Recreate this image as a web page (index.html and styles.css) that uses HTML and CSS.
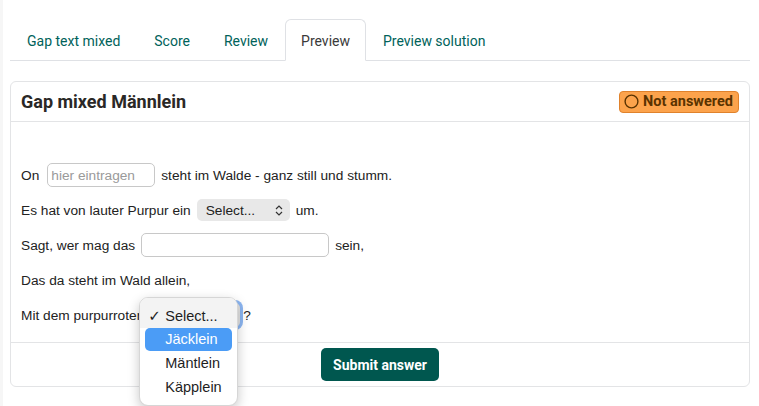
FILE: index.html
```html
<!DOCTYPE html>
<html lang="de">

<head>
    <meta charset="UTF-8">
    <meta name="viewport" content="width=device-width, initial-scale=1.0">
    <title>Preview</title>
    <link rel="stylesheet" href="styles.css">
</head>

<body>

    <ul class="tabs">
        <li class="tab">Gap text mixed</li>
        <li class="tab">Score</li>
        <li class="tab">Review</li>
        <li class="tab ativo">Preview</li>
        <li class="tab">Preview solution</li>
    </ul>

    <div class="card">
        <div class="card-topo">
            <h2 class="titulo">Gap mixed Männlein</h2>
            <span class="selo">
                <svg width="15" height="15" viewBox="0 0 15 15"><circle cx="7.5" cy="7.5" r="6.4" fill="none" stroke="#5a3300" stroke-width="1.4"/></svg>
                Not answered
            </span>
        </div>

        <div class="card-corpo">
            <div class="linha">
                <span>On</span>
                <input class="campo campo-curto" type="text" placeholder="hier eintragen">
                <span>steht im Walde - ganz still und stumm.</span>
            </div>
            <div class="linha">
                <span>Es hat von lauter Purpur ein</span>
                <span class="escolha">
                    Select...
                    <svg width="8" height="11" viewBox="0 0 8 11"><path d="M1 4 L4 1 L7 4 M1 7 L4 10 L7 7" fill="none" stroke="#333" stroke-width="1.2"/></svg>
                </span>
                <span>um.</span>
            </div>
            <div class="linha">
                <span>Sagt, wer mag das</span>
                <input class="campo campo-longo" type="text">
                <span>sein,</span>
            </div>
            <div class="linha">
                <span>Das da steht im Wald allein,</span>
            </div>
            <div class="linha">
                <span>Mit dem purpurroten</span>
                <span class="escolha-aberta">
                    <span class="escolha escolha-foco"></span>
                    <ul class="menu">
                        <li class="opcao marcada"><span class="check">✓</span>Select...</li>
                        <li class="opcao destaque">Jäcklein</li>
                        <li class="opcao">Mäntlein</li>
                        <li class="opcao">Käpplein</li>
                    </ul>
                </span>
                <span class="colado">?</span>
            </div>
        </div>

        <div class="card-rodape">
            <button class="botao">Submit answer</button>
        </div>
    </div>

</body>

</html>
```

FILE: styles.css
```css
html {
    height: 100%;
}

body {
    box-sizing: border-box;
    min-height: 100%;
    margin: 0;
    padding: 19px 9px 0 7px;
    background-color: #fff;
    font-family: Roboto, "Liberation Sans", sans-serif;
    border-left: 3px solid #f6f6f6;
}

.tabs {
    display: flex;
    list-style: none;
    margin: 0;
    padding: 0;
    border-bottom: 1px solid #dfe1e5;
}

.tab {
    padding: 12px 16px 10px 16px;
    font-size: 14px;
    line-height: 18px;
    color: #00625a;
    border: 1px solid transparent;
    border-radius: 6px 6px 0 0;
    margin-bottom: -1px;
}

.tab.ativo {
    color: #3a3a3a;
    background-color: #fff;
    border-color: #dfe1e5 #dfe1e5 #fff;
    padding: 12px 15px 10px 15px;
}

.card {
    margin-top: 20px;
    border: 1px solid #e3e4e6;
    border-radius: 6px;
}

.card-topo {
    display: flex;
    justify-content: space-between;
    align-items: center;
    height: 39px;
    padding: 0 10px;
    border-bottom: 1px solid #e3e4e6;
}

.titulo {
    margin: 0;
    font-size: 18px;
    font-weight: bold;
    color: #2a2826;
}

.selo {
    display: flex;
    align-items: center;
    gap: 4px;
    height: 20px;
    padding: 0 5px 0 4px;
    background-color: #fca34c;
    border: 1px solid #e0822c;
    border-radius: 4px;
    color: #5a3300;
    font-size: 14.5px;
    font-weight: bold;
}

.card-corpo {
    padding: 41px 10px 15px 10px;
    font-family: "Liberation Sans", Arial, sans-serif;
    font-size: 13.7px;
    color: #222;
}

.linha {
    display: flex;
    align-items: center;
    gap: 6px;
    height: 24px;
    margin-bottom: 11px;
}

.linha:last-child {
    margin-bottom: 0;
}

.campo {
    box-sizing: border-box;
    height: 24px;
    border: 1px solid #c8c8c8;
    border-radius: 5px;
    padding: 0 3px;
    font-family: "Liberation Sans", Arial, sans-serif;
    font-size: 13.7px;
    outline: none;
}

.campo::placeholder {
    color: #9a9a9a;
}

.campo-curto {
    width: 108px;
    margin-left: 2px;
}

.campo-longo {
    width: 188px;
}

.escolha {
    box-sizing: border-box;
    display: flex;
    align-items: center;
    justify-content: space-between;
    width: 93px;
    height: 22px;
    padding: 0 7px 0 9px;
    background-color: #e8e8e8;
    border-radius: 5px;
    color: #222;
}

.escolha-aberta {
    position: relative;
    display: flex;
}

.escolha-foco {
    width: 90px;
    height: 24px;
    background-color: #e2e2e2;
    box-shadow: 0 0 0 3px #8cb6f2;
}

.colado {
    margin-left: -3px;
}

.menu {
    position: absolute;
    left: -11px;
    top: -6px;
    width: 99px;
    box-sizing: border-box;
    margin: 0;
    padding: 0 5px 6px 5px;
    list-style: none;
    background-color: #fff;
    border: 1px solid #d6d6d6;
    border-radius: 9px;
    box-shadow: 0 4px 12px rgba(0, 0, 0, 0.22);
    font-family: "Liberation Sans", Arial, sans-serif;
    font-size: 14.5px;
    color: #1e1e1e;
}

.opcao {
    height: 24px;
    line-height: 24px;
    padding-left: 20px;
    border-radius: 5px;
}

.opcao.marcada {
    position: relative;
    height: 23px;
    line-height: 23px;
    margin: 0 -5px 0 -5px;
    padding-top: 7px;
    padding-left: 25px;
    background-color: #f3f3f3;
    border-radius: 8px 8px 0 0;
}

.check {
    position: absolute;
    left: 8px;
    font-family: "DejaVu Sans", sans-serif;
    font-size: 15px;
    font-weight: bold;
}

.opcao.destaque {
    height: 23px;
    line-height: 23px;
    background-color: #4b9cf6;
    color: #fff;
}

.card-rodape {
    display: flex;
    justify-content: center;
    padding: 5px 0 5px 0;
    border-top: 1px solid #e3e4e6;
}

.botao {
    height: 33px;
    padding: 0 12px;
    background-color: #00574f;
    color: #fff;
    border: none;
    border-radius: 5px;
    font-family: Roboto, "Liberation Sans", sans-serif;
    font-size: 14px;
    font-weight: bold;
}
```
